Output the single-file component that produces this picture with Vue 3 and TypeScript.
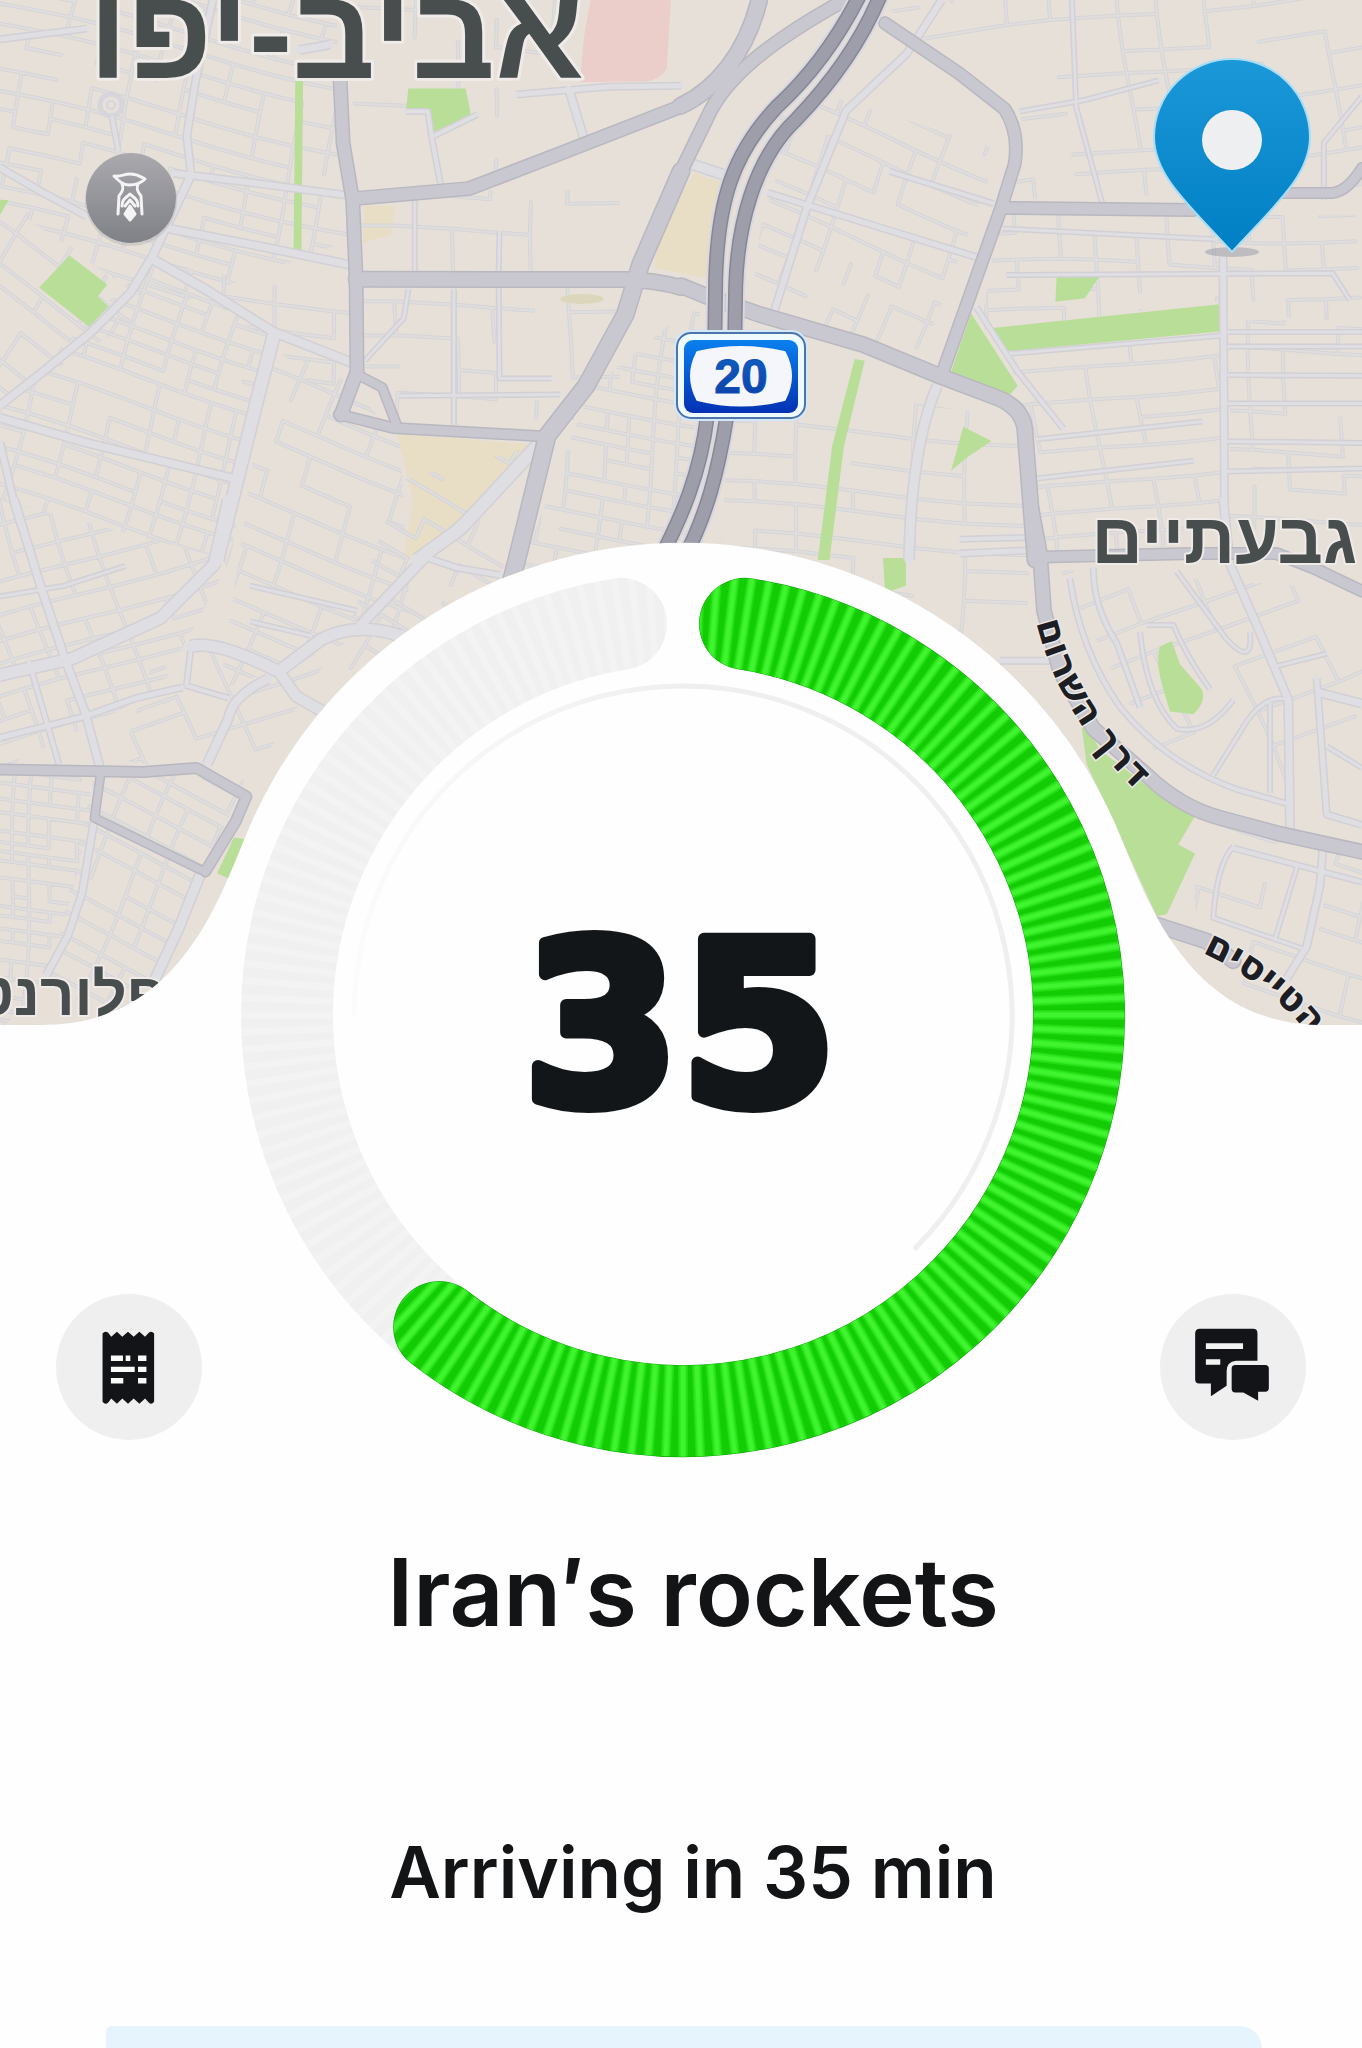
<script setup lang="ts">
type Sheet = 'nw' | 'ne' | 'sw' | 'se'
type Kind = 'lane' | 'street' | 'avenue' | 'highway'
interface Road { d: string; w: number; kind: Kind }

/* Each map sheet keeps its own drawing units: [origin x, origin y, scale x, scale y]. */
const sheets: Record<Sheet, [number, number, number, number]> = {
  nw: [0, 0, 681 / 1568, 560 / 1568],
  ne: [681, 0, 681 / 1568, 560 / 1568],
  sw: [0, 500, 560 / 1568, 560 / 1568],
  se: [960, 500, 1 / 3, 560 / 1568],
}

function place(sheet: Sheet, d: string): string {
  const [ox, oy, sx, sy] = sheets[sheet]
  return d.replace(/(-?\d+) (-?\d+)/g, (_m, x: string, y: string) =>
    `${(ox + Number(x) * sx).toFixed(1)} ${(oy + Number(y) * sy).toFixed(1)}`)
}

function roads(kind: Kind, sheet: Sheet, list: [string, number][]): Road[] {
  return list.map(([d, w]) => ({ d: place(sheet, d), w, kind }))
}

const streets: Road[] = [
  ...roads('street', 'nw', [
    ['M0 1135 L100 1040 L210 930 L300 820 L350 720 L440 490', 8],
    ['M350 725 L480 815 L630 930 L820 1020', 9],
    ['M630 940 L590 1130 L545 1350 L500 1568', 13],
    ['M0 1170 L200 1240 L540 1340', 8],
    ['M0 470 L100 540 L200 605', 7],
    ['M390 640 L600 690 L820 745', 8],
    ['M400 485 L600 515 L820 550', 7],
    ['M440 490 L430 380 L450 230 L490 0', 7],
    ['M258 330 L272 420', 5],
    ['M0 1240 L35 1420 L75 1568', 7],
    ['M0 110 L200 80', 6],
    ['M1240 1245 L1060 1480 L960 1568', 13],
    ['M1190 265 L1400 243 L1568 240', 6],
    ['M1310 250 L1345 390', 8],
    ['M935 312 L985 312 L995 390 L1015 520', 5],
    ['M1000 380 L1100 320', 5],
    ['M690 140 L760 125', 8],
    ['M1045 810 L1045 1190', 4],
    ['M955 550 L955 770', 4],
    ['M1150 650 L1148 770 L1150 1060 L1270 1060', 4],
    ['M920 1108 L1290 1105', 4],
    ['M840 1010 L930 890 L940 810', 4],
  ]),
  ...roads('street', 'ne', [
    ['M1248 720 L1250 1100 L1252 1568', 7],
    ['M590 1080 Q530 1250 525 1568', 10],
    ['M600 0 L520 150 L380 310 L290 580 L215 870', 7],
    ['M200 540 L440 630 L680 720', 6],
    ['M680 860 L775 1040 L880 1200', 5],
    ['M25 460 L100 490', 10],
    ['M480 480 L720 570', 5],
    ['M760 990 L1240 940', 4],
    ['M780 312 L930 280 L1100 225', 4],
    ['M750 770 L1500 765 L1540 840', 4],
    ['M1260 930 L1568 930', 4],
    ['M1260 970 L1568 970', 4],
    ['M1260 1050 L1568 1052', 4],
    ['M1260 1130 L1568 1130', 4],
    ['M1260 1236 L1568 1240', 4],
    ['M1260 1320 L1568 1312', 4],
    ['M820 1230 L1200 1180', 4],
    ['M820 1340 L1180 1290', 4],
    ['M900 0 L910 300 L970 570', 4],
    ['M740 640 L1230 670', 4],
    ['M1480 560 L1480 400 L1568 270', 4],
  ]),
  ...roads('street', 'sw', [
    ['M40 0 L110 230 L180 440 L240 600 L280 750', 8],
    ['M640 0 L600 180 L450 330 L200 445 L0 490', 12],
    ['M0 665 L240 605 L380 555 L510 525', 6],
    ['M535 410 Q600 390 780 480 L900 390 Q1000 340 1120 380', 12],
    ['M780 480 L830 550 L900 590', 11],
    ['M750 500 Q650 550 640 610 L580 740', 9],
    ['M535 410 L522 520 L640 555', 5],
    ['M1370 0 L1190 160 L1010 350', 10],
    ['M1190 160 L1280 190 L1400 210', 6],
    ['M265 890 L230 1100 L190 1220 L130 1330', 7],
    ['M560 1050 L500 1200 L430 1350', 10],
    ['M80 450 L130 620 L165 740', 5],
    ['M0 270 L180 240 L350 185', 4],
    ['M700 340 L870 380', 4],
    ['M700 240 L1000 310', 4],
  ]),
  ...roads('street', 'se', [
    ['M790 0 L810 180 L890 350 L985 560 L990 925', 8],
    ['M1090 960 L1080 1080 L1040 1250 L980 1340', 7],
    ['M820 970 Q770 1020 760 1170 L1040 1260', 4],
    ['M820 975 L1206 1070', 5],
    ['M1010 1030 L945 1230', 4],
    ['M540 370 Q560 560 650 640 Q740 660 820 560', 4],
    ['M560 350 L640 350 Q680 440 750 530', 4],
    ['M400 190 Q400 300 470 400 L540 580', 5],
    ['M330 220 Q360 420 480 580 Q620 740 830 810 L980 850', 5],
    ['M760 770 L860 620 Q920 540 985 560', 4],
    ['M930 570 L930 820', 4],
    ['M1070 500 L1100 880 L1206 910', 6],
    ['M950 465 L1100 430', 4],
    ['M650 200 L800 390 Q880 470 870 370', 4],
    ['M0 150 L230 140', 6],
    ['M120 450 L270 450', 6],
    ['M1080 540 L1206 570', 8],
    ['M1100 690 L1206 750', 4],
    ['M0 110 L210 105', 5],
  ]),
]

const avenues: Road[] = [
  ...roads('avenue', 'nw', [
    ['M783 225 L790 400 L812 560 L820 780 L822 1040 L785 1162', 13],
    ['M815 556 L1080 528 L1300 425 L1568 298', 13],
    ['M820 782 L1440 783 Q1510 785 1568 805', 15],
    ['M1568 480 L1475 740 L1440 880 L1350 1080 L1260 1220 L1190 1568 L1170 1660', 17],
    ['M825 1050 L880 1085 L915 1195', 9],
    ['M780 1160 L905 1198 L1255 1222', 10],
  ]),
  ...roads('avenue', 'ne', [
    ['M180 0 C150 150 80 250 0 296', 16],
    ['M370 5 C200 120 100 220 60 330 L0 480', 13],
    ['M0 800 L60 830 L180 880 L420 965 L600 1055 L720 1110 Q790 1140 792 1210 L815 1568', 15],
    ['M470 65 L640 205 L745 305 Q780 370 768 460 L735 590 L600 1050', 12],
    ['M740 582 L1180 588', 12],
    ['M1380 540 L1500 540 Q1535 535 1568 470', 10],
  ]),
  ...roads('avenue', 'sw', [
    ['M0 755 L400 762 L550 750 L690 830 L660 900 L575 1040', 10],
    ['M282 765 L265 890 L560 1035', 8],
  ]),
  ...roads('avenue', 'se', [
    ['M210 0 L240 150 L252 310 L300 480 L400 640 L560 770 Q660 860 780 890 L960 935 L1206 985', 14],
    ['M245 160 L700 150 L950 150 L1060 190 L1206 255', 11],
    ['M590 1190 L740 1235 L820 1290', 15],
  ]),
]

const highways: Road[] = roads('highway', 'ne', [
  ['M410 -10 C360 110 300 210 220 300 C120 430 85 560 80 780 L78 930 L60 1170 C45 1320 5 1440 -50 1568', 13],
  ['M458 -10 C410 130 340 240 265 335 C165 450 130 640 126 800 L124 930 L105 1170 C85 1320 60 1440 5 1568', 13],
])

const greens: string[] = [
  place('nw', 'M160 715 L247 797 L225 830 L250 858 L205 915 L90 805 Z'),
  place('nw', 'M940 248 L1072 248 L1084 320 L1000 372 L990 312 L935 310 Z'),
  place('nw', 'M680 225 L698 225 L694 700 L676 700 Z'),
  place('nw', 'M0 560 L20 560 L0 602 Z'),
  place('ne', 'M668 878 L775 1080 L755 1108 L622 1040 Z'),
  place('ne', 'M718 918 L1240 852 L1240 928 L750 984 Z'),
  place('ne', 'M865 770 L965 770 L930 835 L862 845 Z'),
  place('ne', 'M650 1195 L715 1235 L660 1280 L622 1318 Z'),
  place('ne', 'M400 1005 L423 1010 L375 1250 L342 1568 L315 1568 L348 1250 Z'),
  place('ne', 'M465 1562 L518 1562 L518 1640 L470 1660 Z'),
  place('sw', 'M655 945 L685 950 L640 1060 L608 1045 Z'),
  place('se', 'M360 600 L420 700 L560 800 L705 885 L655 965 L705 990 L620 1160 L590 1165 L460 900 L380 740 Z'),
  place('se', 'M635 395 L660 460 L725 530 Q740 565 700 600 L630 592 L610 530 Q585 450 600 410 Z'),
]

const sands: string[] = [
  place('nw', 'M840 575 L910 575 L900 660 L835 680 Z'),
  place('nw', 'M915 1215 L1225 1245 L1060 1450 L970 1568 L930 1568 L950 1400 Z'),
  place('ne', 'M30 485 L105 515 L62 780 L-60 750 L-55 650 Z'),
]

const clinic = place('nw', 'M1360 0 L1545 0 L1535 190 Q1520 225 1480 228 L1335 230 L1345 100 Z')

/* Side streets: irregular grids, one per quarter. */
interface Quarter { id: string; area: string; cx: number; cy: number; reach: number; tilt: number; step: number; keep: number }

const quarters: Quarter[] = [
  { id: 'q1', area: '0,0 335,0 350,240 160,310 0,200', cx: 170, cy: 150, reach: 260, tilt: 14, step: 21, keep: 0.82 },
  { id: 'q2', area: '0,190 150,310 0,405', cx: 60, cy: 300, reach: 150, tilt: 35, step: 24, keep: 0.7 },
  { id: 'q3', area: '150,260 350,300 345,420 270,340', cx: 250, cy: 320, reach: 150, tilt: 5, step: 25, keep: 0.7 },
  { id: 'q4', area: '150,262 270,335 230,560 0,500 0,405', cx: 140, cy: 420, reach: 220, tilt: 17, step: 19, keep: 0.93 },
  { id: 'q5', area: '270,340 345,380 400,440 410,620 220,690', cx: 300, cy: 520, reach: 210, tilt: 20, step: 22, keep: 0.85 },
  { id: 'q6', area: '350,190 620,190 620,420 370,420', cx: 480, cy: 310, reach: 200, tilt: 1, step: 30, keep: 0.5 },
  { id: 'q7', area: '590,390 700,300 690,560 500,620', cx: 600, cy: 440, reach: 160, tilt: 8, step: 16, keep: 0.88 },
  { id: 'q8', area: '0,500 230,560 160,690 0,770', cx: 100, cy: 630, reach: 200, tilt: -17, step: 23, keep: 0.93 },
  { id: 'q9', area: '0,770 92,770 90,820 50,980 0,1030', cx: 45, cy: 880, reach: 170, tilt: 4, step: 13, keep: 0.93 },
  { id: 'q10', area: '95,770 245,780 200,880 120,1030 50,980', cx: 150, cy: 880, reach: 180, tilt: 25, step: 20, keep: 0.9 },
  { id: 'q11', area: '160,640 340,640 250,780 120,760', cx: 240, cy: 700, reach: 140, tilt: -20, step: 24, keep: 0.7 },
  { id: 'q12', area: '400,480 560,440 480,620 330,680', cx: 440, cy: 560, reach: 140, tilt: 28, step: 22, keep: 0.6 },
  { id: 'q13', area: '350,0 680,0 640,100 460,190 350,190', cx: 500, cy: 90, reach: 190, tilt: 4, step: 34, keep: 0.35 },
  { id: 'q14', area: '780,80 1000,150 920,360 750,310', cx: 870, cy: 210, reach: 180, tilt: 22, step: 23, keep: 0.6 },
  { id: 'q15', area: '880,0 1362,0 1362,190 1010,200 1000,110', cx: 1150, cy: 100, reach: 260, tilt: -6, step: 29, keep: 0.7 },
  { id: 'q16', area: '1000,215 1362,215 1362,340 1230,300 980,330', cx: 1170, cy: 260, reach: 220, tilt: 1, step: 21, keep: 0.6 },
  { id: 'q17', area: '1010,350 1225,335 1225,540 1040,560', cx: 1120, cy: 450, reach: 170, tilt: -7, step: 25, keep: 0.85 },
  { id: 'q18', area: '1230,320 1362,320 1362,530 1230,530', cx: 1300, cy: 430, reach: 160, tilt: 1, step: 27, keep: 0.75 },
  { id: 'q19', area: '730,410 900,400 1020,420 1040,690 900,600 720,560', cx: 870, cy: 510, reach: 200, tilt: 4, step: 26, keep: 0.78 },
  { id: 'q20', area: '1060,570 1362,590 1362,820 1180,800', cx: 1230, cy: 680, reach: 190, tilt: -22, step: 36, keep: 0.42 },
  { id: 'q21', area: '1190,820 1362,850 1362,1030 1200,980', cx: 1280, cy: 930, reach: 150, tilt: 16, step: 30, keep: 0.6 },
]

function sideStreets(q: Quarter, seed: number): string {
  let s = seed * 7919 + 17
  const rand = () => {
    s = (s * 1664525 + 1013904223) % 4294967296
    return s / 4294967296
  }
  const stops = (gap: number) => {
    const out: number[] = []
    for (let v = -q.reach; v < q.reach; v += gap * (0.65 + rand() * 0.8)) out.push(v)
    return out
  }
  const xs = stops(q.step * 1.7)
  const ys = stops(q.step)
  const a = (q.tilt * Math.PI) / 180
  const pt = (x: number, y: number) => {
    const by = y + Math.sin(x / 60) * 4
    const bx = x + Math.sin(y / 55) * 5
    return `${(q.cx + bx * Math.cos(a) - by * Math.sin(a)).toFixed(1)} ${(q.cy + bx * Math.sin(a) + by * Math.cos(a)).toFixed(1)}`
  }
  let d = ''
  for (let i = 0; i < xs.length - 1; i++) {
    for (let j = 0; j < ys.length - 1; j++) {
      if (rand() < q.keep) d += `M${pt(xs[i], ys[j])} L${pt(xs[i + 1], ys[j])}`
      if (rand() < q.keep * 0.8) d += `M${pt(xs[i], ys[j])} L${pt(xs[i], ys[j + 1])}`
    }
  }
  return d
}

const lanes = quarters.map((q, i) => ({ id: q.id, area: q.area, d: sideStreets(q, i + 1) }))

/* Gauge geometry: angles run clockwise from twelve o'clock. */
const minutes = 35
const cx = 683
const cy = 1015
const radius = 396

function polar(deg: number, r: number): string {
  const t = (deg * Math.PI) / 180
  return `${(cx + r * Math.sin(t)).toFixed(2)} ${(cy - r * Math.cos(t)).toFixed(2)}`
}

function arc(from: number, to: number, r: number): string {
  return `M${polar(from, r)} A${r} ${r} 0 ${to - from > 180 ? 1 : 0} 1 ${polar(to, r)}`
}

const doneArc = arc(9, 218, radius)
const restArc = arc(212, 351, radius)
const innerArc = arc(-90, 135, 329)

const ribs = Array.from({ length: 160 }, (_v, i) => `M${polar(i * 2.25, 346)} L${polar(i * 2.25, 446)}`).join(' ')
</script>

<template>
  <main class="trip">
    <section class="hero">
      <svg class="scene" viewBox="0 0 1362 1460" role="img" aria-label="Map and arrival countdown">
        <defs>
          <clipPath v-for="q in lanes" :id="q.id" :key="q.id"><polygon :points="q.area" /></clipPath>
          <linearGradient id="pin" x1="0" y1="0" x2="0" y2="1">
            <stop offset="0" stop-color="#1b98d8" /><stop offset="1" stop-color="#007fc4" />
          </linearGradient>
          <linearGradient id="badge" x1="0" y1="0" x2="0" y2="1">
            <stop offset="0" stop-color="#a9a9ae" /><stop offset="1" stop-color="#808187" />
          </linearGradient>
          <linearGradient id="shield" x1="0" y1="0" x2="0" y2="1">
            <stop offset="0" stop-color="#0a80ee" /><stop offset="1" stop-color="#0431b4" />
          </linearGradient>
          <linearGradient id="digits" x1="0" y1="0" x2="0" y2="1">
            <stop offset="0" stop-color="#1262c4" /><stop offset="1" stop-color="#0a3da6" />
          </linearGradient>
          <linearGradient id="hairline" gradientUnits="userSpaceOnUse" x1="354" y1="0" x2="683" y2="0">
            <stop offset="0" stop-color="#fbfbfb" /><stop offset="1" stop-color="#efefef" />
          </linearGradient>
          <mask id="done" maskUnits="userSpaceOnUse" x="200" y="540" width="960" height="920">
            <path :d="doneArc" fill="none" stroke="#fff" stroke-width="91" stroke-linecap="round" />
          </mask>
          <mask id="rest" maskUnits="userSpaceOnUse" x="200" y="540" width="960" height="920">
            <path :d="restArc" fill="none" stroke="#fff" stroke-width="92" stroke-linecap="round" />
          </mask>
          <path id="way-shalom" d="M1030 590 C1040 660 1072 728 1136 790" />
          <path id="way-pilots" d="M1190 948 Q1262 976 1310 1036" />
        </defs>

        <rect width="1362" height="1040" fill="#e6e0d9" />
        <path v-for="d in sands" :key="d" :d="d" fill="#e8dec5" />
        <path :d="clinic" fill="#ebcdc9" />
        <g v-for="q in lanes" :key="q.id" :clip-path="`url(#${q.id})`" fill="none" stroke-linecap="round">
          <path :d="q.d" stroke="#d5d4d7" stroke-width="4" />
          <path :d="q.d" stroke="#e0dddd" stroke-width="2" />
        </g>
        <ellipse cx="582" cy="299" rx="22" ry="5" fill="#dcd7bc" />
        <path v-for="d in greens" :key="d" :d="d" fill="#b8de98" />

        <g fill="none" stroke-linejoin="round">
          <path v-for="r in streets" :key="r.d" :d="r.d" :stroke-width="r.w + 2" stroke="#d2d0d5" />
          <circle cx="111" cy="105" r="11" fill="#e6e0d9" stroke="#d6d5da" stroke-width="5" />
          <circle cx="111" cy="105" r="4" stroke="#d6d5da" stroke-width="2" />
          <path v-for="r in streets" :key="r.d" :d="r.d" :stroke-width="r.w - 1" stroke="#dfdee2" stroke-linecap="round" />
          <path v-for="r in avenues" :key="r.d" :d="r.d" :stroke-width="r.w + 2" stroke="#b9b7bf" stroke-linecap="round" />
          <path v-for="r in avenues" :key="r.d" :d="r.d" :stroke-width="r.w - 1" stroke="#c9c8d0" stroke-linecap="round" />
          <path v-for="r in highways" :key="r.d" :d="r.d" :stroke-width="r.w + 6" stroke="#d9d8de" />
          <path v-for="r in highways" :key="r.d" :d="r.d" :stroke-width="r.w + 2" stroke="#868694" />
          <path v-for="r in highways" :key="r.d" :d="r.d" :stroke-width="r.w - 1" stroke="#9e9eab" />
        </g>

        <g class="place">
          <text x="584" y="78" font-size="130" stroke-width="6">אביב-יפו</text>
          <text x="1357" y="563" font-size="71" stroke-width="4">גבעתיים</text>
          <text x="166" y="1015" font-size="60" stroke-width="4">פלורנטין</text>
        </g>
        <g class="way">
          <text><textPath href="#way-shalom" startOffset="100%">דרך השרום</textPath></text>
          <text><textPath href="#way-pilots" startOffset="100%">הטייסים</textPath></text>
        </g>

        <circle cx="131" cy="200" r="46" fill="#8f8f96" opacity=".25" />
        <circle cx="131" cy="198" r="45" fill="url(#badge)" />
        <g fill="none" stroke="#f4f4f5" stroke-width="3" stroke-linecap="round" stroke-linejoin="round">
          <path d="M114 176 C122 177 123 174 130 174 C138 174 141 177 145 179 C140 184 134 185 129 185 C123 185 119 181 114 176 Z" />
          <path d="M122 184 C124 188 123 191 119 196 L118 214 M138 184 C136 188 137 191 141 196 L142 214" />
          <path d="M122 206 C122 199 126 198 130 194 C134 198 138 199 138 206" />
          <path d="M125 206 L130 200 L135 206" />
          <path d="M130 206 L135 214 L130 220 L125 214 Z" fill="#f4f4f5" />
        </g>

        <ellipse cx="1232" cy="252" rx="27" ry="5" fill="#8f90a0" opacity=".45" />
        <path d="M1232 252 C1190 206 1154 176 1154 137 A78 78 0 0 1 1310 137 C1310 176 1274 206 1232 252 Z"
          fill="url(#pin)" stroke="#a9dcf5" stroke-width="2" />
        <circle cx="1232" cy="140" r="30" fill="#eeeff1" />

        <rect x="674" y="330" width="134" height="91" rx="17" fill="#d3e7fa" />
        <rect x="677" y="333" width="128" height="85" rx="14" fill="#eefaff" stroke="#4d74ab" stroke-width="2" />
        <rect x="684" y="340" width="114" height="73" rx="9" fill="url(#shield)" />
        <path d="M698 353 Q741 343 784 353 Q796 376 784 399 Q741 410 698 399 Q686 376 698 353 Z" fill="#f4f6fb"
          stroke="#f4f6fb" stroke-width="4" stroke-linejoin="round" />
        <text class="route" x="741" y="393">20</text>

        <path d="M0 1025 L40 1025 C115 1025 160 992 196 939 C214 912 228 880 244 840 A472 470 0 0 1 1122 840
          C1138 880 1152 912 1170 939 C1206 992 1251 1025 1326 1025 L1362 1025 L1362 1460 L0 1460 Z" fill="#fefefe" />

        <g mask="url(#rest)" fill="none">
          <circle :cx="cx" :cy="cy" :r="radius" stroke="#f0f0f0" stroke-width="96" />
          <path :d="ribs" stroke="#f3f3f3" stroke-width="7" />
        </g>
        <path :d="doneArc" fill="none" stroke="#12a30c" stroke-width="92" stroke-linecap="round" />
        <g mask="url(#done)" fill="none">
          <circle :cx="cx" :cy="cy" :r="radius" stroke="#13cc03" stroke-width="96" />
          <path :d="ribs" stroke="#22dc12" stroke-width="10" />
          <path :d="ribs" stroke="#33ea23" stroke-width="7" />
          <path :d="ribs" stroke="#40f42f" stroke-width="4" />
        </g>
        <path :d="innerArc" fill="none" stroke="url(#hairline)" stroke-width="5" stroke-linecap="round" />
        <text class="count" x="680" y="1104">{{ minutes }}</text>
      </svg>

      <nav class="actions">
        <button type="button" aria-label="Order details">
          <svg viewBox="57 42 436 436" aria-hidden="true">
            <path fill="#121417" d="M196 160 Q204 150 213 158 L222 170 L239 155 L255 170 L272 155 L289 170 L306 155 L323 170 L334 158 Q342 150 350 160
              V364 Q342 374 334 366 L323 354 L306 370 L289 354 L272 370 L255 354 L239 370 L222 354 L213 366 Q204 374 196 364 Z" />
            <path fill="#fafafa" d="M221 226h36v16h-36z M265 226h14v16h-14z M302 226h25v16h-25z M221 259h71v16h-71z M302 259h25v16h-25z M221 293h37v16h-37z M302 293h25v16h-25z" />
          </svg>
        </button>
        <button type="button" aria-label="Messages">
          <svg viewBox="63 44 436 436" aria-hidden="true">
            <path fill="#121417" d="M182 148 H341 Q354 148 354 161 V243 H290 Q262 246 262 274 V318 L215 349 V311 H180 Q168 311 168 299 V162 Q168 148 182 148 Z" />
            <path fill="#121417" d="M288 256 H377 Q388 256 388 267 V325 Q388 336 377 336 H356 V363 L312 338 H288 Q277 338 277 327 V267 Q277 256 288 256 Z" />
            <path fill="#f3f3f3" d="M200 191h111v17h-111z M200 239h43v16h-43z" />
          </svg>
        </button>
      </nav>
    </section>

    <section class="status">
      <h1>Iran′s rockets</h1>
      <p>Arriving in {{ minutes }} min</p>
    </section>
    <section class="card" aria-label="Details"></section>
  </main>
</template>

<style>
body {
  margin: 0;
  background: #fefefe;
}
</style>

<style scoped>
.trip {
  display: flex;
  flex-direction: column;
  min-height: 100vh;
  overflow: hidden;
  color: #131416;
  font-family: Inter, "Liberation Sans", sans-serif;
}

.hero {
  display: grid;
}

.scene,
.actions {
  grid-area: 1 / 1;
}

.scene {
  display: block;
  width: 100%;
  height: auto;
}

.place text {
  direction: rtl;
  fill: #484d4e;
  stroke: #eeebe8;
  paint-order: stroke;
  stroke-linejoin: round;
  font-family: "Liberation Sans", sans-serif;
  font-weight: 700;
}

.way text {
  direction: rtl;
  fill: #1c1e24;
  stroke: #ece8e4;
  stroke-width: 3px;
  paint-order: stroke;
  font-family: "DejaVu Sans", sans-serif;
  font-size: 38px;
  font-weight: 700;
}

.route {
  fill: url(#digits);
  stroke: #0e50b5;
  stroke-width: 1px;
  font-family: "Liberation Sans", sans-serif;
  font-size: 48px;
  font-weight: 700;
  text-anchor: middle;
}

.count {
  fill: #131619;
  stroke: #131619;
  stroke-width: 12px;
  stroke-linejoin: round;
  font-family: "DejaVu Sans", sans-serif;
  font-size: 226px;
  font-weight: 700;
  text-anchor: middle;
}

.actions {
  display: flex;
  align-self: end;
  justify-content: space-between;
  padding: 0 56px 20px;
}

.actions button {
  width: 146px;
  height: 146px;
  padding: 0;
  border: 0;
  border-radius: 50%;
  background: #efefef;
}

.actions svg {
  display: block;
  width: 100%;
  height: 100%;
}

.status {
  display: flex;
  flex-direction: column;
  gap: 180px;
  padding: 76px 0 110px 24px;
  text-align: center;
}

h1,
p {
  margin: 0;
  font-weight: 600;
}

h1 {
  font-size: 94px;
  line-height: 112px;
}

p {
  font-size: 71px;
  line-height: 88px;
}

.card {
  flex: 1;
  min-height: 22px;
  margin: 0 100px 0 106px;
  border-radius: 8px 32px 0 0;
  background: #e6f4fe;
}
</style>
